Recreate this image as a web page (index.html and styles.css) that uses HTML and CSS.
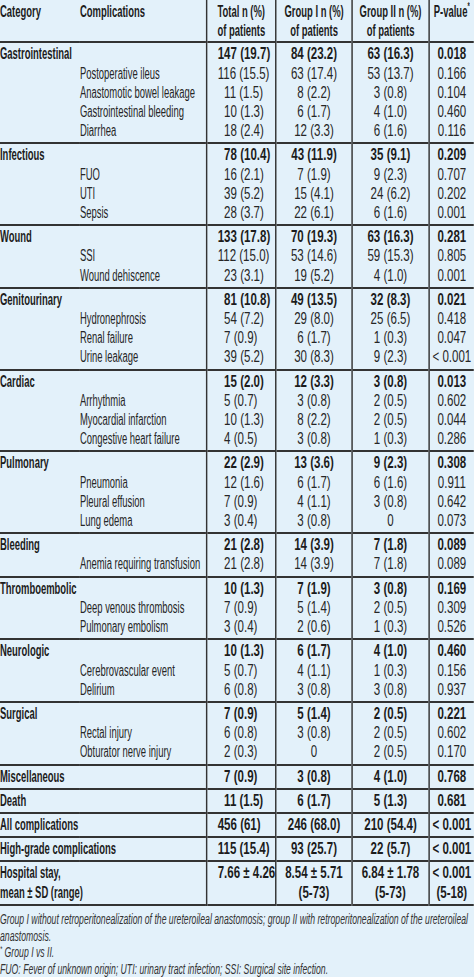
FILE: index.html
```html
<!DOCTYPE html>
<html lang="en">
<head>
<meta charset="utf-8">
<title>Complications table</title>
<link rel="stylesheet" href="styles.css">
</head>
<body>
<div class="frame">
<div class="sheet">
<table class="tbl">
  <colgroup>
    <col class="c-cat"><col class="c-comp"><col class="c-tot"><col class="c-g1"><col class="c-g2"><col class="c-p">
  </colgroup>
  <thead>
    <tr>
      <th><span class="lab">Category</span></th>
      <th><span class="lab">Complications</span></th>
      <th class="v tot"><span class="lab">Total n (%)<br>of patients</span></th>
      <th class="v ctr"><span class="lab">Group I n (%)<br>of patients</span></th>
      <th class="v ctr"><span class="lab">Group II n (%)<br>of patients</span></th>
      <th class="v ctr"><span class="lab">P-value<sup>*</sup></span></th>
    </tr>
  </thead>
  <tbody>
    <tr class="cat"><td colspan="2"><span class="lab">Gastrointestinal</span></td><td class="v tot w3">147 (19.7)</td><td class="v ctr">84 (23.2)</td><td class="v ctr">63 (16.3)</td><td class="v ctr">0.018</td></tr>
    <tr><td></td><td><span class="lab">Postoperative ileus</span></td><td class="v tot w3">116 (15.5)</td><td class="v ctr">63 (17.4)</td><td class="v ctr">53 (13.7)</td><td class="v ctr">0.166</td></tr>
    <tr><td></td><td><span class="lab">Anastomotic bowel leakage</span></td><td class="v tot">11 (1.5)</td><td class="v ctr">8 (2.2)</td><td class="v ctr">3 (0.8)</td><td class="v ctr">0.104</td></tr>
    <tr><td></td><td><span class="lab">Gastrointestinal bleeding</span></td><td class="v tot">10 (1.3)</td><td class="v ctr">6 (1.7)</td><td class="v ctr">4 (1.0)</td><td class="v ctr">0.460</td></tr>
    <tr><td></td><td><span class="lab">Diarrhea</span></td><td class="v tot">18 (2.4)</td><td class="v ctr">12 (3.3)</td><td class="v ctr">6 (1.6)</td><td class="v ctr">0.116</td></tr>
  </tbody>
  <tbody>
    <tr class="cat"><td colspan="2"><span class="lab">Infectious</span></td><td class="v tot">78 (10.4)</td><td class="v ctr">43 (11.9)</td><td class="v ctr">35 (9.1)</td><td class="v ctr">0.209</td></tr>
    <tr><td></td><td><span class="lab">FUO</span></td><td class="v tot">16 (2.1)</td><td class="v ctr">7 (1.9)</td><td class="v ctr">9 (2.3)</td><td class="v ctr">0.707</td></tr>
    <tr><td></td><td><span class="lab">UTI</span></td><td class="v tot">39 (5.2)</td><td class="v ctr">15 (4.1)</td><td class="v ctr">24 (6.2)</td><td class="v ctr">0.202</td></tr>
    <tr><td></td><td><span class="lab">Sepsis</span></td><td class="v tot">28 (3.7)</td><td class="v ctr">22 (6.1)</td><td class="v ctr">6 (1.6)</td><td class="v ctr">0.001</td></tr>
  </tbody>
  <tbody>
    <tr class="cat"><td colspan="2"><span class="lab">Wound</span></td><td class="v tot w3">133 (17.8)</td><td class="v ctr">70 (19.3)</td><td class="v ctr">63 (16.3)</td><td class="v ctr">0.281</td></tr>
    <tr><td></td><td><span class="lab">SSI</span></td><td class="v tot w3">112 (15.0)</td><td class="v ctr">53 (14.6)</td><td class="v ctr">59 (15.3)</td><td class="v ctr">0.805</td></tr>
    <tr><td></td><td><span class="lab">Wound dehiscence</span></td><td class="v tot">23 (3.1)</td><td class="v ctr">19 (5.2)</td><td class="v ctr">4 (1.0)</td><td class="v ctr">0.001</td></tr>
  </tbody>
  <tbody>
    <tr class="cat"><td colspan="2"><span class="lab">Genitourinary</span></td><td class="v tot">81 (10.8)</td><td class="v ctr">49 (13.5)</td><td class="v ctr">32 (8.3)</td><td class="v ctr">0.021</td></tr>
    <tr><td></td><td><span class="lab">Hydronephrosis</span></td><td class="v tot">54 (7.2)</td><td class="v ctr">29 (8.0)</td><td class="v ctr">25 (6.5)</td><td class="v ctr">0.418</td></tr>
    <tr><td></td><td><span class="lab">Renal failure</span></td><td class="v tot">7 (0.9)</td><td class="v ctr">6 (1.7)</td><td class="v ctr">1 (0.3)</td><td class="v ctr">0.047</td></tr>
    <tr><td></td><td><span class="lab">Urine leakage</span></td><td class="v tot">39 (5.2)</td><td class="v ctr">30 (8.3)</td><td class="v ctr">9 (2.3)</td><td class="v ctr">&lt; 0.001</td></tr>
  </tbody>
  <tbody>
    <tr class="cat"><td colspan="2"><span class="lab">Cardiac</span></td><td class="v tot">15 (2.0)</td><td class="v ctr">12 (3.3)</td><td class="v ctr">3 (0.8)</td><td class="v ctr">0.013</td></tr>
    <tr><td></td><td><span class="lab">Arrhythmia</span></td><td class="v tot">5 (0.7)</td><td class="v ctr">3 (0.8)</td><td class="v ctr">2 (0.5)</td><td class="v ctr">0.602</td></tr>
    <tr><td></td><td><span class="lab">Myocardial infarction</span></td><td class="v tot">10 (1.3)</td><td class="v ctr">8 (2.2)</td><td class="v ctr">2 (0.5)</td><td class="v ctr">0.044</td></tr>
    <tr><td></td><td><span class="lab">Congestive heart failure</span></td><td class="v tot">4 (0.5)</td><td class="v ctr">3 (0.8)</td><td class="v ctr">1 (0.3)</td><td class="v ctr">0.286</td></tr>
  </tbody>
  <tbody>
    <tr class="cat"><td colspan="2"><span class="lab">Pulmonary</span></td><td class="v tot">22 (2.9)</td><td class="v ctr">13 (3.6)</td><td class="v ctr">9 (2.3)</td><td class="v ctr">0.308</td></tr>
    <tr><td></td><td><span class="lab">Pneumonia</span></td><td class="v tot">12 (1.6)</td><td class="v ctr">6 (1.7)</td><td class="v ctr">6 (1.6)</td><td class="v ctr">0.911</td></tr>
    <tr><td></td><td><span class="lab">Pleural effusion</span></td><td class="v tot">7 (0.9)</td><td class="v ctr">4 (1.1)</td><td class="v ctr">3 (0.8)</td><td class="v ctr">0.642</td></tr>
    <tr><td></td><td><span class="lab">Lung edema</span></td><td class="v tot">3 (0.4)</td><td class="v ctr">3 (0.8)</td><td class="v ctr">0</td><td class="v ctr">0.073</td></tr>
  </tbody>
  <tbody>
    <tr class="cat"><td colspan="2"><span class="lab">Bleeding</span></td><td class="v tot">21 (2.8)</td><td class="v ctr">14 (3.9)</td><td class="v ctr">7 (1.8)</td><td class="v ctr">0.089</td></tr>
    <tr><td></td><td><span class="lab">Anemia requiring transfusion</span></td><td class="v tot">21 (2.8)</td><td class="v ctr">14 (3.9)</td><td class="v ctr">7 (1.8)</td><td class="v ctr">0.089</td></tr>
  </tbody>
  <tbody>
    <tr class="cat"><td colspan="2"><span class="lab">Thromboembolic</span></td><td class="v tot">10 (1.3)</td><td class="v ctr">7 (1.9)</td><td class="v ctr">3 (0.8)</td><td class="v ctr">0.169</td></tr>
    <tr><td></td><td><span class="lab">Deep venous thrombosis</span></td><td class="v tot">7 (0.9)</td><td class="v ctr">5 (1.4)</td><td class="v ctr">2 (0.5)</td><td class="v ctr">0.309</td></tr>
    <tr><td></td><td><span class="lab">Pulmonary embolism</span></td><td class="v tot">3 (0.4)</td><td class="v ctr">2 (0.6)</td><td class="v ctr">1 (0.3)</td><td class="v ctr">0.526</td></tr>
  </tbody>
  <tbody>
    <tr class="cat"><td colspan="2"><span class="lab">Neurologic</span></td><td class="v tot">10 (1.3)</td><td class="v ctr">6 (1.7)</td><td class="v ctr">4 (1.0)</td><td class="v ctr">0.460</td></tr>
    <tr><td></td><td><span class="lab">Cerebrovascular event</span></td><td class="v tot">5 (0.7)</td><td class="v ctr">4 (1.1)</td><td class="v ctr">1 (0.3)</td><td class="v ctr">0.156</td></tr>
    <tr><td></td><td><span class="lab">Delirium</span></td><td class="v tot">6 (0.8)</td><td class="v ctr">3 (0.8)</td><td class="v ctr">3 (0.8)</td><td class="v ctr">0.937</td></tr>
  </tbody>
  <tbody>
    <tr class="cat"><td colspan="2"><span class="lab">Surgical</span></td><td class="v tot">7 (0.9)</td><td class="v ctr">5 (1.4)</td><td class="v ctr">2 (0.5)</td><td class="v ctr">0.221</td></tr>
    <tr><td></td><td><span class="lab">Rectal injury</span></td><td class="v tot">6 (0.8)</td><td class="v ctr">3 (0.8)</td><td class="v ctr">2 (0.5)</td><td class="v ctr">0.602</td></tr>
    <tr><td></td><td><span class="lab">Obturator nerve injury</span></td><td class="v tot">2 (0.3)</td><td class="v ctr">0</td><td class="v ctr">2 (0.5)</td><td class="v ctr">0.170</td></tr>
  </tbody>
  <tbody>
    <tr class="cat"><td colspan="2"><span class="lab">Miscellaneous</span></td><td class="v tot">7 (0.9)</td><td class="v ctr">3 (0.8)</td><td class="v ctr">4 (1.0)</td><td class="v ctr">0.768</td></tr>
  </tbody>
  <tbody>
    <tr class="cat"><td colspan="2"><span class="lab">Death</span></td><td class="v tot">11 (1.5)</td><td class="v ctr">6 (1.7)</td><td class="v ctr">5 (1.3)</td><td class="v ctr">0.681</td></tr>
  </tbody>
  <tbody>
    <tr class="cat"><td colspan="2"><span class="lab">All complications</span></td><td class="v tot w3">456 (61)</td><td class="v ctr">246 (68.0)</td><td class="v ctr">210 (54.4)</td><td class="v ctr">&lt; 0.001</td></tr>
  </tbody>
  <tbody>
    <tr class="cat"><td colspan="2"><span class="lab">High-grade complications</span></td><td class="v tot w3">115 (15.4)</td><td class="v ctr">93 (25.7)</td><td class="v ctr">22 (5.7)</td><td class="v ctr">&lt; 0.001</td></tr>
  </tbody>
  <tbody>
    <tr class="cat"><td colspan="2"><span class="lab">Hospital stay,<br>mean ± SD (range)</span></td><td class="v tot w3">7.66 ± 4.26</td><td class="v ctr">8.54 ± 5.71<br>(5-73)</td><td class="v ctr">6.84 ± 1.78<br>(5-73)</td><td class="v ctr">&lt; 0.001<br>(5-18)</td></tr>
  </tbody>
</table>
</div>
<div class="notes">
  <p>Group I without retroperitonealization of the ureteroileal anastomosis; group II with retroperitonealization of the ureteroileal anastomosis.</p>
  <p><sup>*</sup> Group I vs II.</p>
  <p>FUO: Fever of unknown origin; UTI: urinary tract infection; SSI: Surgical site infection.</p>
</div>
</div>
</body>
</html>
```

FILE: styles.css
```css
html, body {
  margin: 0;
  padding: 0;
  background: #e3f1fa;
  overflow: hidden;
}

body {
  font-family: "Liberation Sans", Arial, sans-serif;
  color: #262626;
}

.frame {
  width: 474px;
  overflow: hidden;
}

/* The source uses a condensed typeface: the sheet is laid out wide and condensed horizontally. */
.sheet {
  width: 658.33px;
  transform: scaleX(0.72);
  transform-origin: 0 0;
}

.tbl {
  width: 658.33px;
  border-collapse: collapse;
  table-layout: fixed;
  font-size: 16px;
  line-height: 19.2px;
}

.c-cat { width: 111.11px; }
.c-comp { width: 176.39px; }
.c-tot { width: 95.83px; }
.c-g1 { width: 105.56px; }
.c-g2 { width: 106.94px; }
.c-p { width: 62.5px; }

.tbl th,
.tbl td {
  padding: 0;
  white-space: nowrap;
  text-align: left;
  vertical-align: top;
}

.tbl thead tr {
  border-bottom: 2px solid #333;
}

.tbl thead th {
  font-weight: bold;
  color: #1c1c1c;
  padding-top: 2px;
  padding-bottom: 1px;
}

.tbl tbody {
  border-bottom: 2px solid #333;
}

.tbl tbody tr:first-child td {
  padding-top: 1px;
}

.tbl tbody tr:last-child td {
  padding-bottom: 2px;
}

.tbl .v {
  border-left: 2.8px solid #333;
}

.tbl .tot {
  padding-left: 22.8px;
}

.tbl .tot.w3,
.tbl th.tot {
  padding-left: 13.9px;
}

.tbl .ctr {
  text-align: center;
}

.tbl .cat td {
  font-weight: bold;
  color: #1c1c1c;
}

.lab {
  display: inline-block;
  transform: scaleX(0.82);
  transform-origin: 0 50%;
}

.ctr .lab {
  transform-origin: 50% 50%;
}

.tbl sup {
  font-size: 10px;
  line-height: 0;
  vertical-align: 7px;
}

.notes {
  width: 764.5px;
  transform: scaleX(0.62);
  transform-origin: 0 0;
  padding-top: 5px;
  font-size: 14px;
  line-height: 16.8px;
  font-style: italic;
  color: #333;
}

.notes p {
  margin: 0;
}

.notes sup {
  font-size: 9px;
  line-height: 0;
  vertical-align: 5px;
}
```
